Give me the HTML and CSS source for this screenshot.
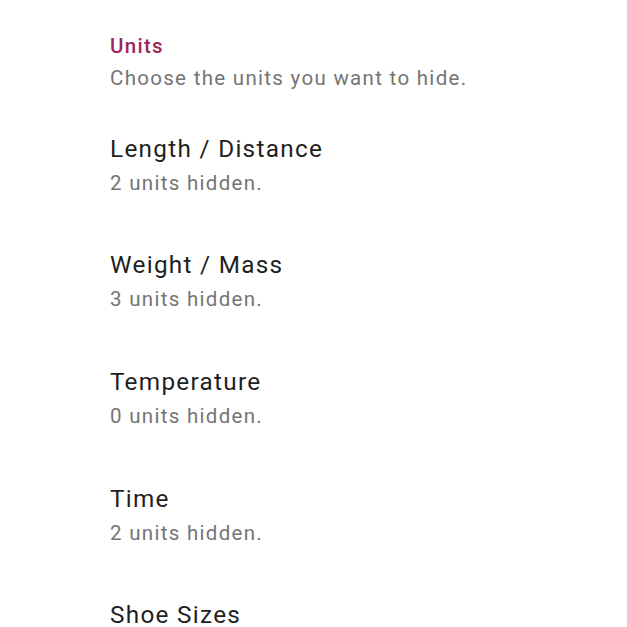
FILE: index.html
```html
<!DOCTYPE html>
<html>
<head>
<meta charset="utf-8">
<link rel="stylesheet" href="styles.css">
</head>
<body>
<div class="screen">
  <div class="category">
    <div class="category-title">Units</div>
    <div class="category-summary">Choose the units you want to hide.</div>
  </div>
  <div class="pref">
    <div class="pref-title">Length / Distance</div>
    <div class="pref-summary">2 units hidden.</div>
  </div>
  <div class="pref">
    <div class="pref-title">Weight / Mass</div>
    <div class="pref-summary">3 units hidden.</div>
  </div>
  <div class="pref">
    <div class="pref-title">Temperature</div>
    <div class="pref-summary">0 units hidden.</div>
  </div>
  <div class="pref">
    <div class="pref-title">Time</div>
    <div class="pref-summary">2 units hidden.</div>
  </div>
  <div class="pref">
    <div class="pref-title">Shoe Sizes</div>
    <div class="pref-summary">0 units hidden.</div>
  </div>
</div>
</body>
</html>
```
FILE: styles.css
```css
html, body {
  margin: 0;
  padding: 0;
  background: #ffffff;
  overflow: hidden;
}
.screen {
  font-family: Roboto, "Noto Sans", sans-serif;
  padding-left: 110px;
  padding-top: 34px;
  height: 627px;
  box-sizing: border-box;
  overflow: hidden;
}
.category {
  display: flex;
  flex-direction: column;
  gap: 8px;
  padding-bottom: 17px;
}
.category-title {
  font-size: 20.5px;
  line-height: 24px;
  font-weight: 500;
  letter-spacing: 1.3px;
  color: #a0255a;
}
.category-summary {
  font-size: 20.5px;
  line-height: 24px;
  letter-spacing: 1.3px;
  color: #757575;
}
.pref {
  display: flex;
  flex-direction: column;
  gap: 8px;
  padding: 27.5px 0 29.2px;
}
.pref-title {
  font-size: 24.3px;
  line-height: 28px;
  letter-spacing: 1.3px;
  color: #1f1f1f;
}
.pref-summary {
  font-size: 20.5px;
  line-height: 24px;
  letter-spacing: 1.3px;
  color: #757575;
}
```
